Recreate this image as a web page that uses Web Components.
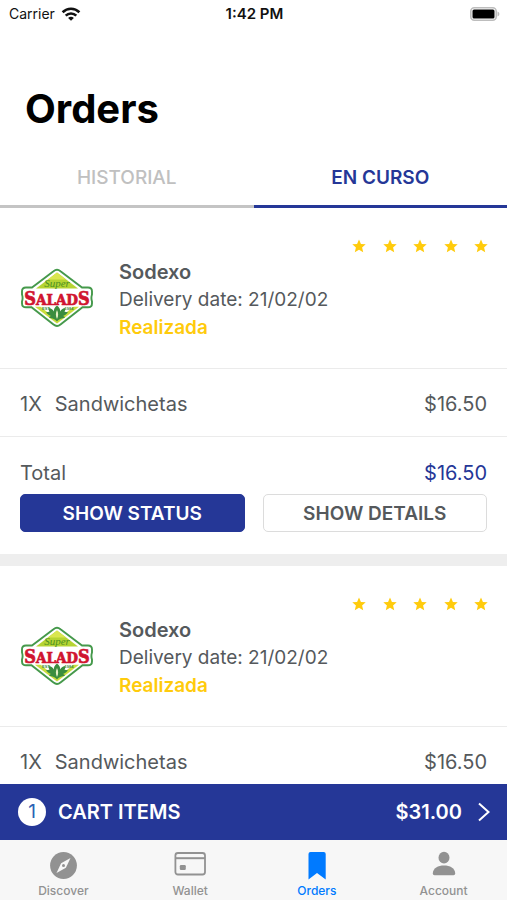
<!DOCTYPE html>
<html lang="es">
<head>
<meta charset="utf-8">
<meta name="viewport" content="width=device-width, initial-scale=1">
<title>Orders</title>
<style>
    body {
        margin: 0;
        background: #fff;
        color: #55595c;
        font-family: Inter, "Liberation Sans", sans-serif;
        font-size: 19px;
        line-height: 28px;
        --brand: #253797;
        --accent: #ffcb0c;
        --line: #ebebeb;
    }
</style>
</head>
<body>
<orders-app></orders-app>

<script>
class StatusBar extends HTMLElement {
    constructor() {
        super();
        this.attachShadow({ mode: 'open' });
    }

    connectedCallback() {
        this.shadowRoot.innerHTML = `
            <style>
                :host {
                    display: grid;
                    grid-template-columns: 1fr auto 1fr;
                    align-items: center;
                    height: 28px;
                    padding: 0 7px 0 9px;
                    color: #111;
                    font-size: 14px;
                }

                .carrier {
                    display: flex;
                    align-items: center;
                    gap: 6px;
                }

                .time {
                    font-size: 15px;
                    font-weight: 600;
                }

                .battery {
                    justify-self: end;
                }
            </style>
            <span class="carrier">
                Carrier
                <svg width="20" height="14" viewBox="0 0 20 14" fill="none" stroke="#111" stroke-width="2.6">
                    <path d="M1.6 5.2C6.4.6 13.6.6 18.4 5.2"/>
                    <path d="M4.7 8.6c3-2.900 7.600-2.900 10.600 0"/>
                    <path d="M10 13.800 7.100 10.900c1.700-1.500 4.100-1.500 5.800 0z" fill="#111" stroke="none"/>
                </svg>
            </span>
            <span class="time">1:42 PM</span>
            <svg class="battery" width="30" height="14" viewBox="0 0 30 14">
                <rect x=".8" y=".8" width="25.400" height="12.400" rx="3.500" fill="#fff" stroke="#bdbdbd" stroke-width="1.600"/>
                <rect x="2.500" y="2.500" width="22" height="9" rx="1.500" fill="#000"/>
                <path d="M27.500 4.500c2.500 1 2.500 4 0 5z" fill="#bdbdbd"/>
            </svg>
        `;
    }
}

class OrderTabs extends HTMLElement {
    constructor() {
        super();
        this.attachShadow({ mode: 'open' });
    }

    connectedCallback() {
        this.shadowRoot.innerHTML = `
            <style>
                :host {
                    display: flex;
                }

                button {
                    flex: 1;
                    padding: 17px 0 13px;
                    border: 0;
                    border-bottom: 3px solid #c4c4c4;
                    background: none;
                    color: #c0c0c0;
                    font: inherit;
                    font-weight: 500;
                }

                button[aria-selected="true"] {
                    border-color: var(--brand);
                    color: var(--brand);
                    font-weight: 600;
                }
            </style>
            <button role="tab" aria-selected="false">HISTORIAL</button>
            <button role="tab" aria-selected="true">EN CURSO</button>
        `;
        this.setAttribute('role', 'tablist');

        const tabs = this.shadowRoot.querySelectorAll('button');
        tabs.forEach(tab => tab.addEventListener('click', () => {
            tabs.forEach(t => t.setAttribute('aria-selected', t === tab));
        }));
    }
}

class StarRating extends HTMLElement {
    constructor() {
        super();
        this.attachShadow({ mode: 'open' });
    }

    get value() {
        return Number(this.getAttribute('value')) || 0;
    }

    connectedCallback() {
        const star = `
            <svg width="14" height="14" viewBox="0 0 24 24">
                <path d="M12 1l3.300 7.500 8.200.7-6.200 5.400 1.900 8L12 18.300l-7.200 4.300 1.900-8L.5 9.200l8.200-.7z"/>
            </svg>`;

        this.shadowRoot.innerHTML = `
            <style>
                :host {
                    display: flex;
                    justify-content: space-between;
                    width: 136px;
                    margin-left: auto;
                    fill: var(--accent);
                }
            </style>
            ${star.repeat(this.value)}
        `;
    }
}

class SaladsLogo extends HTMLElement {
    constructor() {
        super();
        this.attachShadow({ mode: 'open' });
    }

    connectedCallback() {
        this.shadowRoot.innerHTML = `
            <style>
                :host {
                    display: block;
                    line-height: 0;
                }
            </style>
            <svg width="72" height="64" viewBox="0 0 72 64">
                <path d="M32.500 3.200Q36 .4 39.500 3.200L61 19.500h6q4 0 4 3.800v3.200q-1.200 3.500 0 7v2q0 3.800-4 3.800H61.500L39.500 56.600Q36 59.400 32.500 56.600L10.500 39.300H5Q1 39.300 1 35.500v-2q1.200-3.500 0-7v-3.200q0-3.800 4-3.800H11z" fill="#fff" stroke="#45994b" stroke-width="1.900"/>
                <path d="M36 4.500 57 20.500H15z" fill="#b5d432"/>
                <path d="M36 4.500 45 11.400H27z" fill="#d9e64f"/>
                <path d="M14 38.800h44L36 55.500z" fill="#c9dc3c"/>
                <path d="M19 38.300h34L36 52z" fill="#fff"/>
                <path d="M36 37.500c2.500 2 3.500 4 3 6 1.500-2.500 3-3.300 5.500-3.500-.2 1.700-.3 2.600-1 3.800l3.500.5c-1.500 2-2.500 3-5 3.600 1 .3 1.500.7 2 1.600-3 1.200-5.500 1-8 4-2.500-3-5-2.800-8-4 .5-.9 1-1.300 2-1.600-2.500-.6-3.500-1.600-5-3.600l3.500-.5c-.7-1.200-.8-2.100-1-3.800 2.500.2 4 1 5.500 3.500-.5-2 .5-4 3-6z" fill="#3b8d3f"/>
                <path d="M36 42c1.500 3 1.500 6 0 9-1.500-3-1.500-6 0-9z" fill="#e6f0c4"/>
                <g text-anchor="middle">
                    <text x="36" y="19" font-family="Liberation Serif, serif" font-size="11" font-style="italic" fill="#4c8f22">Super</text>
                    <text x="36" y="36.500" font-family="DejaVu Serif Condensed, DejaVu Serif, serif" font-size="15" font-weight="700" fill="#d0142f" stroke="#d0142f" stroke-width=".7"><tspan font-size="18">S</tspan>ALAD<tspan font-size="18">S</tspan></text>
                    <text x="25" y="41.500" font-family="Liberation Sans, sans-serif" font-size="4" font-weight="700" fill="#3b8d3f">EST</text>
                    <text x="48" y="41.500" font-family="Liberation Sans, sans-serif" font-size="4" font-weight="700" fill="#3b8d3f">1984</text>
                </g>
            </svg>
        `;
    }
}

class OrderItem extends HTMLElement {
    constructor() {
        super();
        this.attachShadow({ mode: 'open' });
    }

    connectedCallback() {
        this.shadowRoot.innerHTML = `
            <style>
                :host {
                    display: flex;
                    gap: 13px;
                    padding: 21px 20px 18px;
                    border-bottom: 1px solid var(--line);
                    font-size: 20px;
                }

                .price {
                    margin-left: auto;
                }
            </style>
            <span>${this.getAttribute('quantity')}X</span>
            <slot></slot>
            <span class="price">${this.getAttribute('price')}</span>
        `;
    }
}

class OrderTotal extends HTMLElement {
    constructor() {
        super();
        this.attachShadow({ mode: 'open' });
    }

    connectedCallback() {
        this.shadowRoot.innerHTML = `
            <style>
                :host {
                    display: block;
                    padding: 22px 20px 22px;
                }

                .total {
                    display: flex;
                    justify-content: space-between;
                    margin-bottom: 7px;
                    font-size: 20px;
                }

                .amount {
                    color: var(--brand);
                }

                .actions {
                    display: flex;
                    gap: 18px;
                }

                button {
                    flex: 1;
                    height: 38px;
                    padding: 2px 0 0;
                    border: 1px solid #dcdcdc;
                    border-radius: 5px;
                    background: #fff;
                    color: inherit;
                    font: inherit;
                    font-weight: 600;
                }

                .primary {
                    border-color: var(--brand);
                    background: var(--brand);
                    color: #fff;
                }
            </style>
            <div class="total">
                <span>Total</span>
                <span class="amount">${this.getAttribute('amount')}</span>
            </div>
            <div class="actions">
                <button class="primary">SHOW STATUS</button>
                <button>SHOW DETAILS</button>
            </div>
        `;
    }
}

class OrderCard extends HTMLElement {
    constructor() {
        super();
        this.attachShadow({ mode: 'open' });
    }

    get vendor() {
        return this.getAttribute('vendor') || '';
    }

    get date() {
        return this.getAttribute('date') || '';
    }

    get status() {
        return this.getAttribute('status') || '';
    }

    connectedCallback() {
        this.shadowRoot.innerHTML = `
            <style>
                :host {
                    display: block;
                    border-bottom: 12px solid #eee;
                }

                header {
                    padding: 31px 19px 26px 21px;
                    border-bottom: 1px solid var(--line);
                }

                .summary {
                    display: flex;
                    align-items: center;
                    gap: 26px;
                    margin-top: 5px;
                }

                h2, p {
                    margin: 0;
                    font-size: inherit;
                    font-weight: 400;
                }

                h2 {
                    font-size: 20px;
                    font-weight: 600;
                }

                .status {
                    color: var(--accent);
                    font-weight: 600;
                }
            </style>
            <header>
                <star-rating value="5"></star-rating>
                <div class="summary">
                    <salads-logo></salads-logo>
                    <div>
                        <h2>${this.vendor}</h2>
                        <p>Delivery date: ${this.date}</p>
                        <p class="status">${this.status}</p>
                    </div>
                </div>
            </header>
            <slot></slot>
        `;
    }
}

class CartBar extends HTMLElement {
    constructor() {
        super();
        this.attachShadow({ mode: 'open' });
    }

    connectedCallback() {
        this.shadowRoot.innerHTML = `
            <style>
                :host {
                    display: block;
                }

                button {
                    display: flex;
                    align-items: center;
                    width: 100%;
                    height: 56px;
                    padding: 0 16px 0 18px;
                    border: 0;
                    background: var(--brand);
                    color: #fff;
                    font: inherit;
                    font-size: 20px;
                    font-weight: 600;
                }

                .count {
                    width: 28px;
                    margin-right: 12px;
                    border-radius: 50%;
                    background: #fff;
                    color: #2b62b5;
                    font-size: 19px;
                    font-weight: 400;
                }

                .price {
                    margin-left: auto;
                    margin-right: 15px;
                }
            </style>
            <button>
                <span class="count">${this.getAttribute('count')}</span>
                <span>CART ITEMS</span>
                <span class="price">${this.getAttribute('price')}</span>
                <svg width="14" height="20" viewBox="0 0 14 20" fill="none" stroke="#fff" stroke-width="2">
                    <path d="M2 1.500 11.500 10 2 18.500"/>
                </svg>
            </button>
        `;
    }
}

class TabItem extends HTMLElement {
    constructor() {
        super();
        this.attachShadow({ mode: 'open' });
    }

    getIcon() {
        const icons = {
            discover: `
                <circle cx="16.500" cy="15.500" r="13.400" fill="currentColor"/>
                <path d="M23.500 8 18.900 17.700 9.500 23l4.600-9.700z" fill="#f7f7f7"/>
                <circle cx="16.500" cy="15.500" r="1.500" fill="currentColor"/>`,
            wallet: `
                <g fill="none" stroke="currentColor" stroke-width="1.800">
                    <rect x="1.400" y="3" width="29.600" height="21.500" rx="2.500"/>
                    <path d="M1.400 8.200h29.600" stroke-width="2"/>
                </g>
                <rect x="5.800" y="15" width="6" height="5" rx="1.200" fill="currentColor"/>`,
            orders: `
                <path d="M9.500 2h13.200q2 0 2 2v25.600L16 23l-8.500 6.600V4q0-2 2-2z" fill="currentColor"/>`,
            account: `
                <ellipse cx="16" cy="7.700" rx="5.500" ry="5.900" fill="currentColor"/>
                <path d="M4.800 23.500C5 18 10 15.500 16 15.500s11 2.500 11.200 8q0 1.700-1.700 1.700h-19q-1.700 0-1.700-1.700z" fill="currentColor"/>`
        };
        return icons[this.getAttribute('icon')];
    }

    connectedCallback() {
        this.shadowRoot.innerHTML = `
            <style>
                :host {
                    flex: 1;
                    display: block;
                    color: #929292;
                }

                :host([active]) {
                    color: #007aff;
                }

                a {
                    display: flex;
                    flex-direction: column;
                    align-items: center;
                    gap: 1px;
                    color: inherit;
                    font-size: 12px;
                    font-weight: 500;
                    line-height: 16px;
                    text-decoration: none;
                }
            </style>
            <a href="#${this.getAttribute('icon')}">
                <svg width="32" height="32" viewBox="0 0 32 32">${this.getIcon()}</svg>
                <slot></slot>
            </a>
        `;
    }
}

class TabBar extends HTMLElement {
    constructor() {
        super();
        this.attachShadow({ mode: 'open' });
    }

    connectedCallback() {
        this.shadowRoot.innerHTML = `
            <style>
                :host {
                    display: block;
                    background: #f7f7f7;
                }

                nav {
                    display: flex;
                    padding: 10px 0 1px;
                }
            </style>
            <nav><slot></slot></nav>
        `;
    }
}

class OrdersApp extends HTMLElement {
    constructor() {
        super();
        this.attachShadow({ mode: 'open' });
    }

    connectedCallback() {
        this.shadowRoot.innerHTML = `
            <style>
                :host {
                    display: flex;
                    flex-direction: column;
                    height: 100vh;
                }

                h1 {
                    margin: 0;
                    padding: 57px 25px 14px;
                    color: #000;
                    font-size: 40px;
                    font-weight: 700;
                    line-height: 48px;
                }

                main {
                    flex: 1;
                    min-height: 0;
                    overflow-y: auto;
                    scrollbar-width: none;
                }
            </style>
            <status-bar></status-bar>
            <h1>Orders</h1>
            <order-tabs></order-tabs>
            <main>
                <order-card vendor="Sodexo" date="21/02/02" status="Realizada">
                    <order-item quantity="1" price="$16.50">Sandwichetas</order-item>
                    <order-total amount="$16.50"></order-total>
                </order-card>
                <order-card vendor="Sodexo" date="21/02/02" status="Realizada">
                    <order-item quantity="1" price="$16.50">Sandwichetas</order-item>
                </order-card>
            </main>
            <cart-bar count="1" price="$31.00"></cart-bar>
            <tab-bar>
                <tab-item icon="discover">Discover</tab-item>
                <tab-item icon="wallet">Wallet</tab-item>
                <tab-item icon="orders" active>Orders</tab-item>
                <tab-item icon="account">Account</tab-item>
            </tab-bar>
        `;
    }
}

customElements.define('status-bar', StatusBar);
customElements.define('order-tabs', OrderTabs);
customElements.define('star-rating', StarRating);
customElements.define('salads-logo', SaladsLogo);
customElements.define('order-item', OrderItem);
customElements.define('order-total', OrderTotal);
customElements.define('order-card', OrderCard);
customElements.define('cart-bar', CartBar);
customElements.define('tab-item', TabItem);
customElements.define('tab-bar', TabBar);
customElements.define('orders-app', OrdersApp);
</script>
</body>
</html>
